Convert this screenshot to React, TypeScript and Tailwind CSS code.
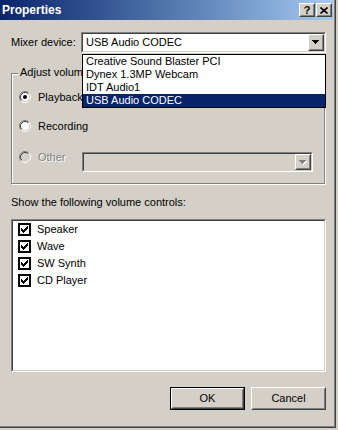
import React from "react";

const font = "font-['Liberation_Sans',Arial,sans-serif]";

const Arrow = ({ disabled }: { disabled?: boolean }) => (
  <svg width="8" height="5" viewBox="0 0 8 5" shapeRendering="crispEdges">
    {disabled && <path d="M1 1h7v1H1z M2 2h5v1H2z M3 3h3v1H3z M4 4h1v1H4z" fill="#fff" />}
    <path d="M0 0h7v1H0z M1 1h5v1H1z M2 2h3v1H2z M3 3h1v1H3z" fill={disabled ? "#808080" : "#000"} />
  </svg>
);

const Raised: React.FC<{ className?: string; children?: React.ReactNode }> = ({ className = "", children }) => (
  <div className={`border border-t-white border-l-white border-b-[#404040] border-r-[#404040] bg-[#d4d0c8] ${className}`}>
    <div className="w-full h-full border border-t-[#d4d0c8] border-l-[#d4d0c8] border-b-[#808080] border-r-[#808080] flex items-center justify-center">
      {children}
    </div>
  </div>
);

const Sunken: React.FC<{ className?: string; inner?: string; children?: React.ReactNode }> = ({ className = "", inner = "", children }) => (
  <div className={`border border-t-[#808080] border-l-[#808080] border-b-white border-r-white ${className}`}>
    <div className={`w-full h-full border border-t-[#404040] border-l-[#404040] border-b-[#d4d0c8] border-r-[#d4d0c8] ${inner}`}>
      {children}
    </div>
  </div>
);

const Radio = ({ checked, disabled }: { checked?: boolean; disabled?: boolean }) => (
  <svg width="12" height="12" viewBox="0 0 12 12">
    <circle cx="6" cy="6" r="4.2" fill={disabled ? "#d4d0c8" : "#fff"} />
    <path d="M2.11 9.89 A5.5 5.5 0 0 1 9.89 2.11" stroke="#808080" fill="none" />
    <path d="M9.89 2.11 A5.5 5.5 0 0 1 2.11 9.89" stroke="#fff" fill="none" />
    <path d="M2.82 9.18 A4.5 4.5 0 0 1 9.18 2.82" stroke="#404040" fill="none" />
    <path d="M9.18 2.82 A4.5 4.5 0 0 1 2.82 9.18" stroke="#d4d0c8" fill="none" />
    {checked && <circle cx="6" cy="6" r="2" fill="#000" />}
  </svg>
);

const Check = () => (
  <div className="w-[13px] h-[13px] border-2 border-black bg-white flex items-center justify-center">
    <svg width="7" height="7" viewBox="0 0 7 7" shapeRendering="crispEdges">
      <path
        d="M6 0h1v1H6z M5 1h2v1H5z M0 2h1v1H0z M4 2h3v1H4z M0 3h2v1H0z M3 3h3v1H3z M0 4h5v1H0z M1 5h3v1H1z M2 6h1v1H2z"
        fill="#000"
      />
    </svg>
  </div>
);

const devices = ["Creative Sound Blaster PCI", "Dynex 1.3MP Webcam", "IDT Audio1", "USB Audio CODEC"];
const controls = ["Speaker", "Wave", "SW Synth", "CD Player"];

export default function App() {
  return (
    <div className={`w-[338px] h-[430px] bg-[#d4d0c8] text-black ${font} text-[11px] leading-[13px]`}>
      <div className="w-[336px] h-[428px] border-r border-b border-[#404040]">
        <div className="w-full h-full border-r border-b border-[#808080] flex flex-col">
          {/* Title bar */}
          <div className="h-[20px] mr-[1px] flex items-center bg-gradient-to-r from-[#0a246a] to-[#a6caf0] pl-[2px] pr-[1px]">
            <span className="text-white font-bold text-[12px]">Properties</span>
            <div className="ml-auto flex gap-[1px]">
              <Raised className="w-[16px] h-[14px]">
                <span className="font-bold text-[11px] leading-[10px]">?</span>
              </Raised>
              <Raised className="w-[16px] h-[14px]">
                <svg width="8" height="7" viewBox="0 0 8 7">
                  <path d="M0.5 0.5 L7.5 6.5 M7.5 0.5 L0.5 6.5" stroke="#000" strokeWidth="1.6" />
                </svg>
              </Raised>
            </div>
          </div>

          <div className="pl-[11px] w-[326px] flex flex-col">
            {/* Mixer device, list dropped open */}
            <div className="mt-[12px] flex items-center h-[21px] relative z-10">
              <span className="w-[70px]">Mixer device:</span>
              <div className="relative">
                <Sunken className="w-[245px] h-[21px]" inner="bg-white flex items-center pl-[3px]">
                  <span>USB Audio CODEC</span>
                  <Raised className="ml-auto w-[16px] h-[17px]">
                    <Arrow />
                  </Raised>
                </Sunken>
                <div className="absolute left-[1px] top-[22px] w-[244px] border border-black bg-white">
                  {devices.map((d) => (
                    <div
                      key={d}
                      className={`h-[13px] pl-[3px] flex items-center ${d === "USB Audio CODEC" ? "bg-[#0a246a] text-white" : ""}`}
                    >
                      {d}
                    </div>
                  ))}
                </div>
              </div>
            </div>

            {/* Adjust volume for */}
            <div className="mt-[20px] relative w-[314px] h-[111px] border border-[#808080] shadow-[inset_1px_1px_0_#fff,1px_1px_0_#fff] pl-[7px] pt-[15px] flex flex-col">
              <span className="absolute left-[6px] top-[-8px] px-[2px] bg-[#d4d0c8]">Adjust volume for</span>
              <div className="flex items-center h-[16px] gap-[7px]">
                <Radio checked />
                <span>Playback</span>
              </div>
              <div className="mt-[13px] flex items-center h-[16px] gap-[7px]">
                <Radio />
                <span>Recording</span>
              </div>
              <div className="mt-[15px] flex items-start">
                <div className="w-[63px] flex items-center h-[16px] gap-[7px]">
                  <Radio disabled />
                  <span className="text-[#808080] [text-shadow:1px_1px_0_#fff]">Other</span>
                </div>
                <Sunken className="mt-[3px] w-[231px] h-[20px]" inner="bg-[#d4d0c8] flex items-center">
                  <Raised className="ml-auto w-[16px] h-[16px]">
                    <Arrow disabled />
                  </Raised>
                </Sunken>
              </div>
            </div>

            {/* Volume controls */}
            <div className="mt-[12px]">Show the following volume controls:</div>
            <Sunken className="mt-[10px] w-[315px] h-[153px]" inner="bg-white pl-[5px] flex flex-col">
              {controls.map((c) => (
                <div key={c} className="h-[17px] flex items-center gap-[6px]">
                  <Check />
                  <span>{c}</span>
                </div>
              ))}
            </Sunken>

            {/* Buttons */}
            <div className="mt-[15px] w-[315px] flex justify-end gap-[6px]">
              <div className="w-[75px] h-[23px] border border-black">
                <Raised className="w-full h-full">OK</Raised>
              </div>
              <Raised className="w-[75px] h-[23px]">Cancel</Raised>
            </div>
          </div>
        </div>
      </div>
    </div>
  );
}
